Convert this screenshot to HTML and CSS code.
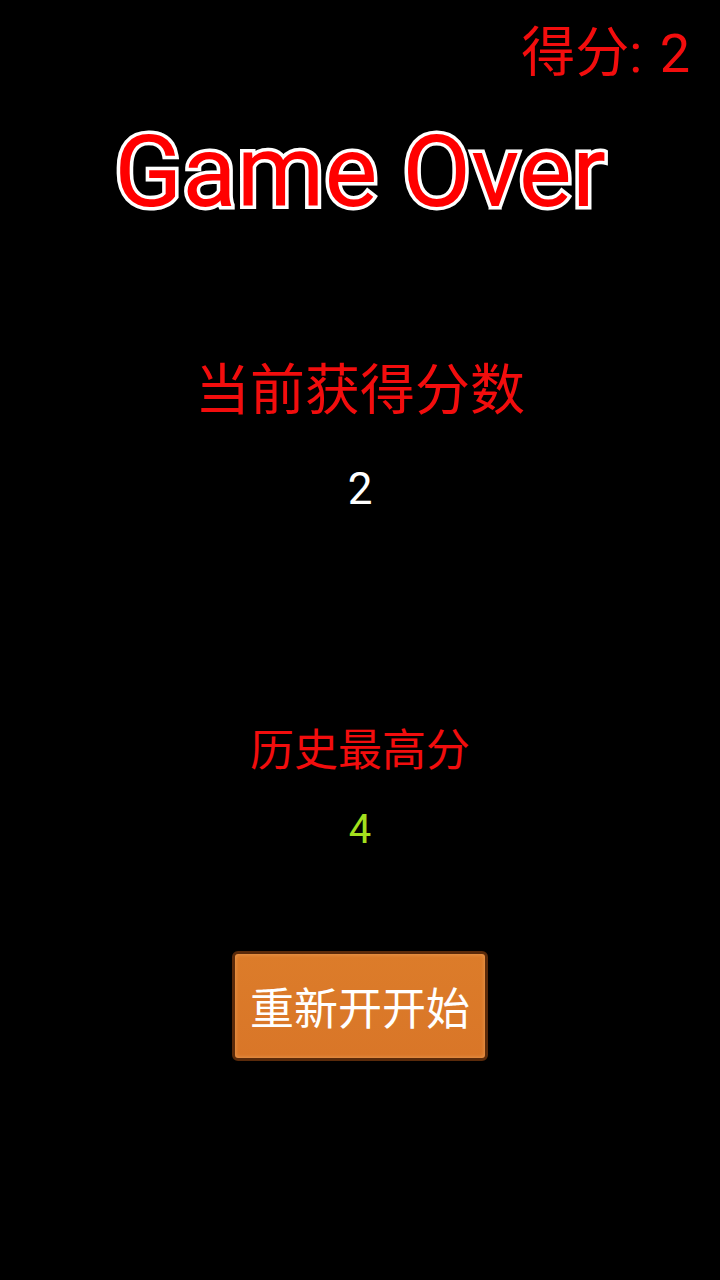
FILE: index.html
```html
<!DOCTYPE html>
<html>
<head>
<meta charset="utf-8">
<link rel="stylesheet" href="styles.css">
</head>
<body>
<div class="screen">
  <div class="topbar"><span class="score">得分: 2</span></div>
  <h1 class="title">Game Over</h1>
  <div class="label current">当前获得分数</div>
  <div class="value white">2</div>
  <div class="label best">历史最高分</div>
  <div class="value green">4</div>
  <button class="restart">重新开开始</button>
</div>
</body>
</html>
```
FILE: styles.css
```css
html, body {
  margin: 0;
  padding: 0;
  background: #000;
}
.screen {
  width: 720px;
  height: 1280px;
  display: flex;
  flex-direction: column;
  align-items: center;
  font-family: "Noto Sans CJK SC", "Noto Sans", sans-serif;
  overflow: hidden;
}
.topbar {
  align-self: stretch;
  display: flex;
  justify-content: flex-end;
  padding: 19px 30px 0 0;
  height: 65px;
}
.score {
  color: #f20d0d;
  font-family: "Roboto", "Noto Sans CJK SC", sans-serif;
  font-size: 54px;
  line-height: 70px;
  word-spacing: 4px;
}
.title {
  margin: 33px 0 0 0;
  font-family: "Roboto", "Liberation Sans", sans-serif;
  font-weight: normal;
  font-size: 100px;
  line-height: 110px;
  color: #f00;
  -webkit-text-stroke: 7px #fff;
  paint-order: stroke fill;
}
.label {
  color: #f20d0d;
  line-height: 1.2;
}
.current {
  font-size: 55px;
  margin-top: 125px;
}
.best {
  font-size: 44px;
  margin-top: 206px;
}
.value {
  font-family: "Roboto", "Noto Sans", sans-serif;
}
.white {
  color: #fff;
  font-size: 44px;
  margin-top: 45px;
}
.green {
  color: #a3e01e;
  font-size: 40px;
  margin-top: 32px;
}
.restart {
  margin-top: 98px;
  width: 256px;
  height: 110px;
  background: linear-gradient(180deg, #dc7c2a 0%, #d97628 100%);
  border: 3px solid #5a2a0a;
  border-radius: 6px;
  color: #fff;
  font-family: "Noto Sans CJK SC", sans-serif;
  font-size: 44px;
  padding: 0;
  box-shadow: inset 0 0 4px rgba(255,200,140,0.5);
}
```
